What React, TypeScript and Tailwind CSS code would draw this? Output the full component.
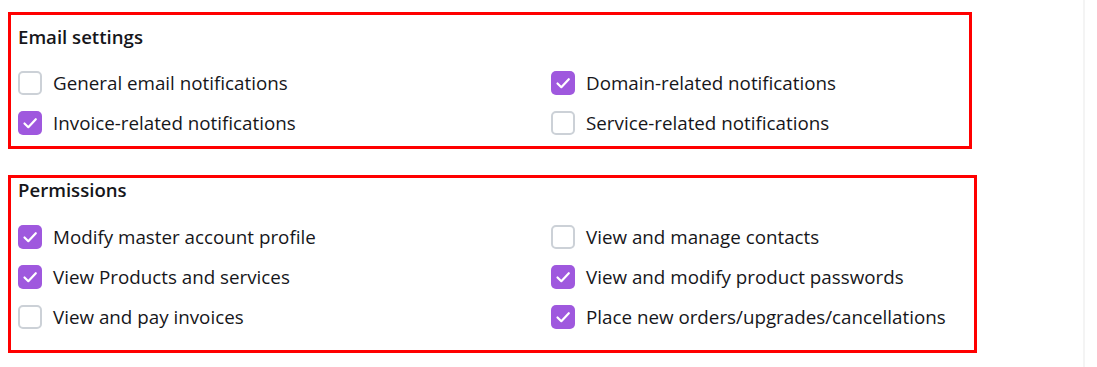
import React from "react";

type Option = { label: string; checked: boolean };

const emailOptions: Option[] = [
  { label: "General email notifications", checked: false },
  { label: "Domain-related notifications", checked: true },
  { label: "Invoice-related notifications", checked: true },
  { label: "Service-related notifications", checked: false },
];

const permissionOptions: Option[] = [
  { label: "Modify master account profile", checked: true },
  { label: "View and manage contacts", checked: false },
  { label: "View Products and services", checked: true },
  { label: "View and modify product passwords", checked: true },
  { label: "View and pay invoices", checked: false },
  { label: "Place new orders/upgrades/cancellations", checked: true },
];

function Check({ checked }: { checked: boolean }) {
  if (checked) {
    return (
      <span className="flex h-6 w-6 shrink-0 rounded-[5px] bg-[#9f58de]">
        <svg width="24" height="24" viewBox="0 0 24 24" fill="none">
          <path
            d="M6.5 12.5 L10.3 16.2 L17.8 8.2"
            stroke="white"
            strokeWidth="2.2"
            strokeLinecap="round"
            strokeLinejoin="round"
          />
        </svg>
      </span>
    );
  }
  return (
    <span className="h-6 w-6 shrink-0 rounded-[5px] border-2 border-[#ccd1d7] bg-white" />
  );
}

function Row({ opt }: { opt: Option }) {
  return (
    <label className="flex h-10 items-center gap-[11px] text-[18.8px] text-[#16161a]">
      <Check checked={opt.checked} />
      <span>{opt.label}</span>
    </label>
  );
}

export default function App() {
  return (
    <div
      className="flex min-h-[367px] bg-white"
      style={{ fontFamily: '"Open Sans", "Noto Sans", sans-serif' }}
    >
      <div className="w-[1083px] pl-2 pt-3">
        {/* email settings */}
        <div className="w-[964px] border-[3px] border-[#ff0000] px-[7px] pt-[10px] pb-[3px]">
          <h3 className="text-[18.6px] leading-6 font-semibold text-[#16161a]">
            Email settings
          </h3>
          <div className="mt-[14px] grid grid-cols-[533px_1fr]">
            {emailOptions.map((o) => (
              <Row key={o.label} opt={o} />
            ))}
          </div>
        </div>

        {/* permissions */}
        <div className="mt-[26px] w-[969px] border-[3px] border-[#ff0000] px-[7px] pt-0 pb-[13px]">
          <h3 className="text-[18.6px] leading-6 font-semibold text-[#16161a]">
            Permissions
          </h3>
          <div className="mt-[15px] grid grid-cols-[533px_1fr]">
            {permissionOptions.map((o) => (
              <Row key={o.label} opt={o} />
            ))}
          </div>
        </div>
      </div>
      <div className="w-[2px] bg-[#f4f4f4]" />
      <div className="flex-1 bg-white" />
    </div>
  );
}
